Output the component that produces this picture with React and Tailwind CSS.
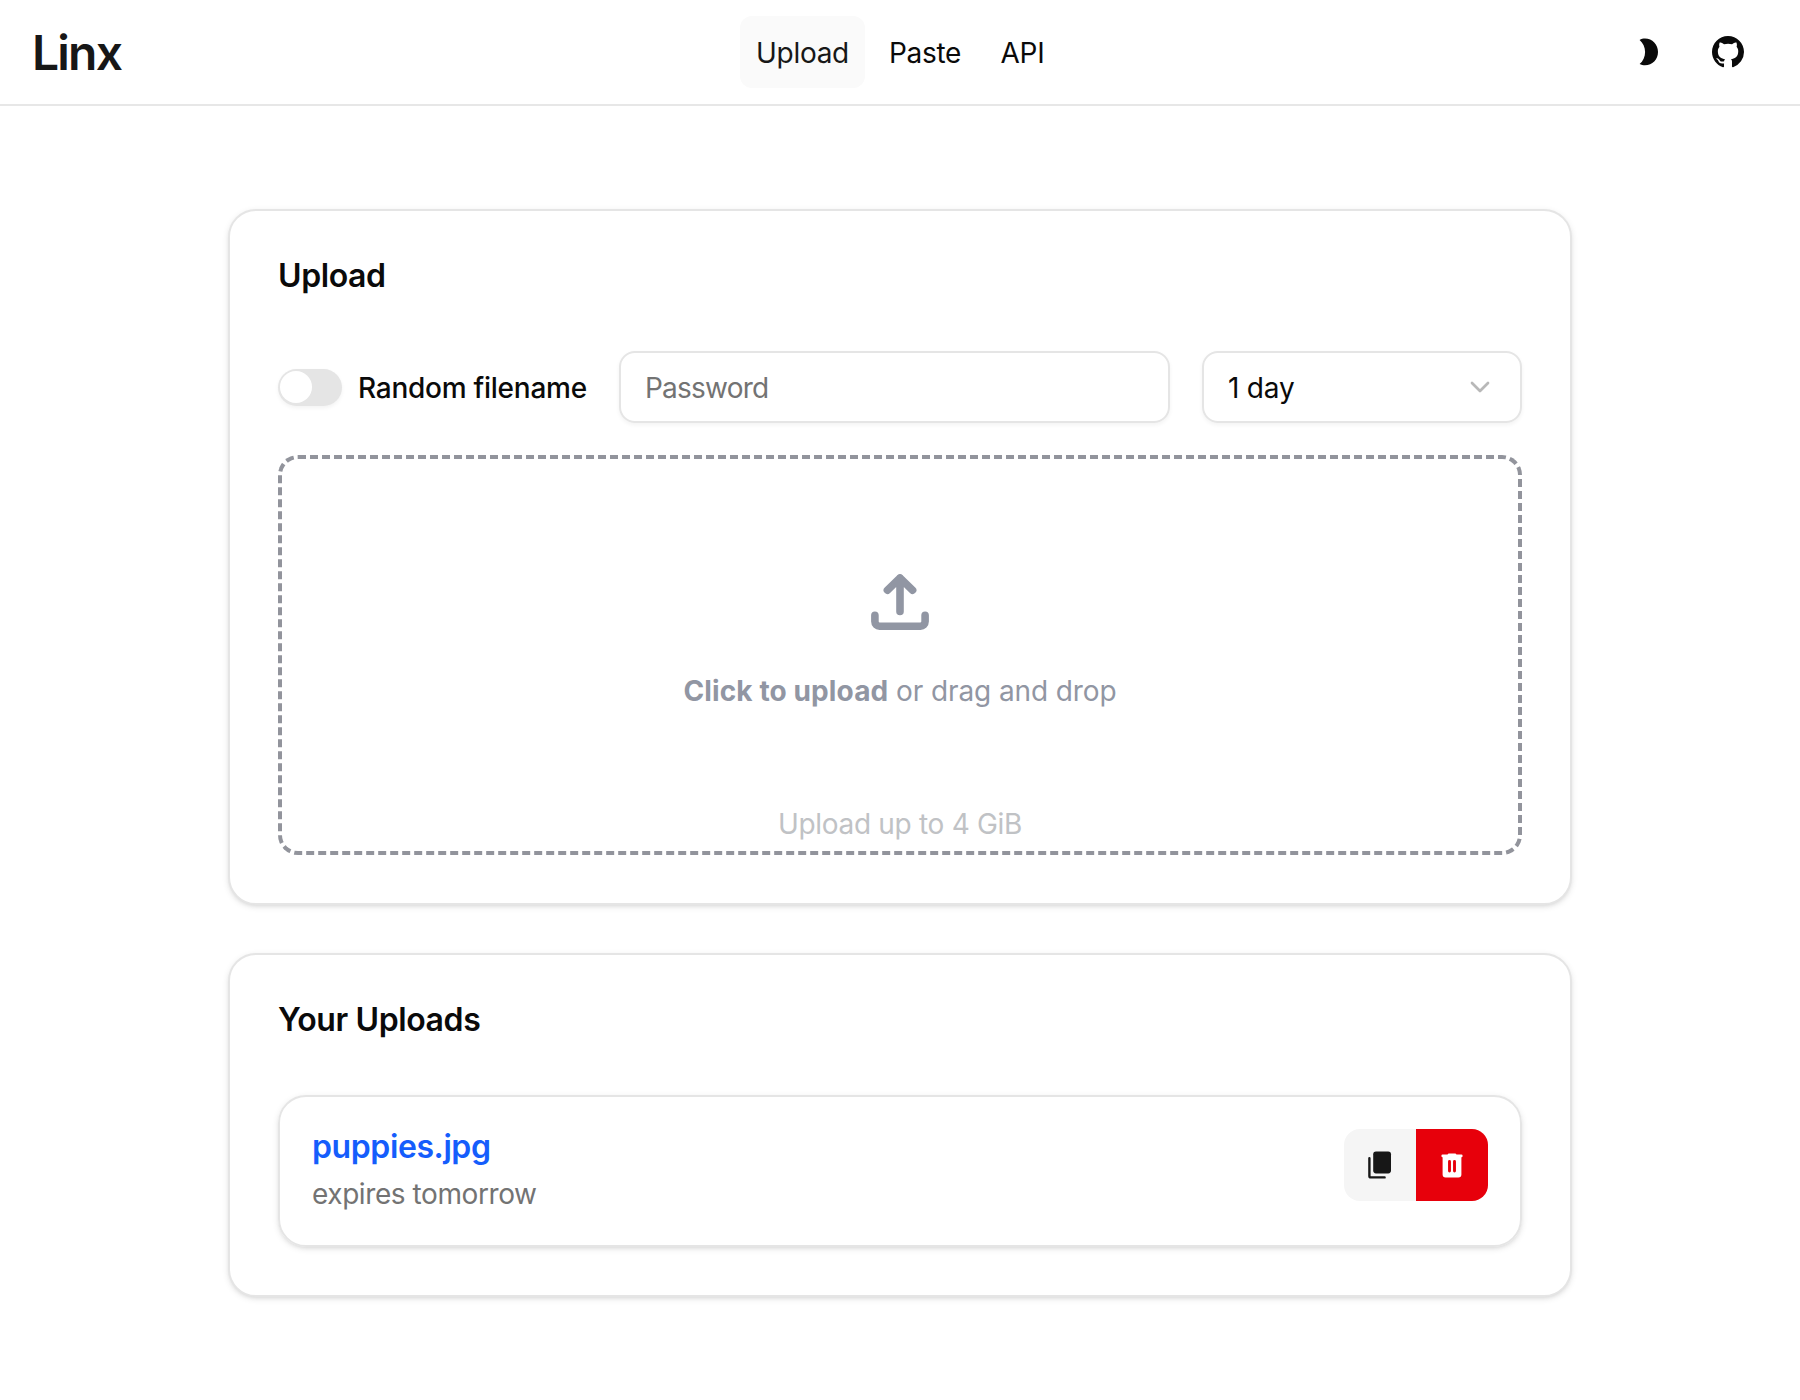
import React from "react";
import { ChevronDown } from "lucide-react";

function MoonIcon() {
  return (
    <svg width="20" height="28" viewBox="0 0 20 28" fill="currentColor" aria-hidden="true">
      <path d="M0.6 1.9C2.2 1 4.2 0.6 6 0.6C13.4 0.6 19 6.6 19 14C19 21.400 13.400 27.300 6 27.300C4.200 27.300 2.200 26.900 0.600 26C4 23.200 6.100 18.900 6.100 14C6.100 9.100 4 4.700 0.600 1.900Z" />
    </svg>
  );
}

function GithubIcon() {
  return (
    <svg width="32" height="32" viewBox="0 0 16 16" fill="currentColor" aria-hidden="true">
      <path d="M8 0C3.58 0 0 3.58 0 8c0 3.54 2.29 6.53 5.47 7.59.4.07.55-.17.55-.38 0-.19-.01-.82-.01-1.49-2.01.37-2.53-.49-2.69-.94-.09-.23-.48-.94-.82-1.13-.28-.15-.68-.52-.01-.53.63-.01 1.08.58 1.23.82.72 1.21 1.87.87 2.33.66.07-.52.28-.87.51-1.07-1.78-.2-3.64-.89-3.64-3.95 0-.87.31-1.59.82-2.15-.08-.2-.36-1.02.08-2.12 0 0 .67-.21 2.2.82.64-.18 1.32-.27 2-.27s1.36.09 2 .27c1.53-1.04 2.2-.82 2.2-.82.44 1.1.16 1.92.08 2.12.51.56.82 1.27.82 2.15 0 3.07-1.87 3.75-3.65 3.95.29.25.54.73.54 1.48 0 1.07-.01 1.93-.01 2.2 0 .21.15.46.55.38A8.01 8.01 0 0 0 16 8c0-4.42-3.58-8-8-8" />
    </svg>
  );
}

function UploadIcon() {
  return (
    <svg width="58" height="56" viewBox="0 0 58 56" fill="none" stroke="currentColor" strokeWidth="7.600" strokeLinecap="round" strokeLinejoin="round" aria-hidden="true">
      <path d="M29 4v33.500M16.400 16.200 29 4l12.600 12.200M3.900 41.300v6.300a4.600 4.600 0 0 0 4.600 4.600h41a4.600 4.600 0 0 0 4.600-4.600v-6.300" />
    </svg>
  );
}

function CopyIcon() {
  return (
    <svg width="24" height="28" viewBox="0 0 24 28" fill="none" aria-hidden="true">
      <rect x="5.200" y="0.400" width="17.800" height="22" rx="2.800" fill="currentColor" />
      <path d="M1.400 7.200V25a1.400 1.400 0 0 0 1.400 1.400H16.600" stroke="currentColor" strokeWidth="2.400" strokeLinecap="round" />
    </svg>
  );
}

function TrashIcon() {
  return (
    <svg width="22" height="25" viewBox="0 0 22 25" aria-hidden="true">
      <path fill="currentColor" d="M7.500 0.400H14.500L15.500 1.600H20.400a1.200 1.200 0 0 1 1.200 1.200V3a1.200 1.200 0 0 1-1.200 1.200V21.600a3 3 0 0 1-3 3H4.600a3 3 0 0 1-3-3V4.200A1.200 1.200 0 0 1 .4 3V2.800A1.200 1.200 0 0 1 1.600 1.600H6.500Z" />
      <path d="M8.500 8.500v9.500M13.500 8.500v9.500" stroke="#e7000b" strokeWidth="2.900" strokeLinecap="round" />
    </svg>
  );
}

function Header() {
  return (
    <header className="grid h-[106px] grid-cols-[1fr_auto_1fr] items-center border-b-2 border-[#e7e7e7] px-[32px]">
      <span className="pt-[2px] text-[48px] leading-none font-semibold tracking-[-1.8px] text-[#171717]">Linx</span>
      <nav className="flex gap-2">
        <a className="flex h-[72px] w-[125px] items-center justify-center rounded-[12px] bg-[#fafafa] pt-px text-[#171717]">Upload</a>
        <a className="flex h-[72px] w-[104px] items-center justify-center pt-px">Paste</a>
        <a className="flex h-[72px] w-[75px] items-center justify-center pt-px">API</a>
      </nav>
      <div className="flex justify-end gap-2 pr-[4px]">
        <button className="flex size-[72px] items-center justify-center pl-[2px]"><MoonIcon /></button>
        <button className="flex size-[72px] items-center justify-center"><GithubIcon /></button>
      </div>
    </header>
  );
}

const cardShadow = "shadow-[0_2px_6px_rgba(0,0,0,0.1),0_2px_4px_-2px_rgba(0,0,0,0.1)]";

function Card({ title, children }) {
  return (
    <section className={`rounded-[28px] border-2 border-[#e5e5e5] bg-white p-[48px] ${cardShadow}`}>
      <h2 className="mb-[59px] pt-[1px] text-[32px] leading-[32px] font-semibold tracking-[-0.4px]">{title}</h2>
      {children}
    </section>
  );
}

export default function App() {
  return (
    <div className="h-[1400px] w-[1800px] overflow-hidden bg-white font-['Inter',sans-serif] text-[28px] leading-[40px] tracking-[-0.3px] text-[#0a0a0a]">
      <Header />
      <main className="mx-auto mt-[103px] flex w-[1344px] flex-col gap-[48px]">
        <Card title="Upload">
          <div className="flex h-[72px] items-center">
            <div className="flex h-[37px] w-[64px] items-center rounded-full bg-[#e5e5e5] px-[2px] shadow-[0_2px_4px_rgba(0,0,0,0.05)]">
              <div className="size-[32px] rounded-full bg-white" />
            </div>
            <span className="ml-[16px] w-[261px] pt-px whitespace-nowrap font-medium tracking-[-0.25px]">Random filename</span>
            <div className="flex h-[72px] w-[551px] items-center rounded-[16px] border-2 border-[#e5e5e5] px-[24px] pt-[2px] tracking-[-0.78px] text-[#737373] shadow-[0_2px_4px_rgba(0,0,0,0.05)]">Password</div>
            <div className="ml-auto flex h-[72px] w-[320px] items-center justify-between rounded-[16px] border-2 border-[#e5e5e5] px-[24px] shadow-[0_2px_4px_rgba(0,0,0,0.05)]">
              <span className="pt-px tracking-[-0.2px]">1 day</span>
              <ChevronDown size={32} className="text-[#737373] opacity-50" />
            </div>
          </div>
          <div className="mt-[32px] flex h-[400px] flex-col items-center rounded-[20px] border-4 border-dashed border-[#92949c] pt-[115px] text-[#9196a3]">
            <UploadIcon />
            <p className="mt-[41px] tracking-[-0.1px]"><span className="font-bold tracking-[0.12px]">Click to upload</span> or drag and drop</p>
            <p className="mt-[93px] text-[#c0c2c5]">Upload up to 4 GiB</p>
          </div>
        </Card>
        <Card title="Your Uploads">
          <div className={`flex h-[152px] items-start justify-between rounded-[28px] border-2 border-[#e5e5e5] p-[32px] ${cardShadow}`}>
            <div>
              <a className="block pt-[2px] text-[32px] leading-[32px] font-semibold tracking-[-0.4px] text-[#155dfc]">puppies.jpg</a>
              <p className="mt-[11px] tracking-[-0.42px] text-[#737373]">expires tomorrow</p>
            </div>
            <div className="flex overflow-hidden rounded-[16px]">
              <button className="flex size-[72px] items-center justify-center bg-[#f5f5f5] text-[#171717]"><CopyIcon /></button>
              <button className="flex size-[72px] items-center justify-center bg-[#e7000b] text-white"><TrashIcon /></button>
            </div>
          </div>
        </Card>
      </main>
    </div>
  );
}
